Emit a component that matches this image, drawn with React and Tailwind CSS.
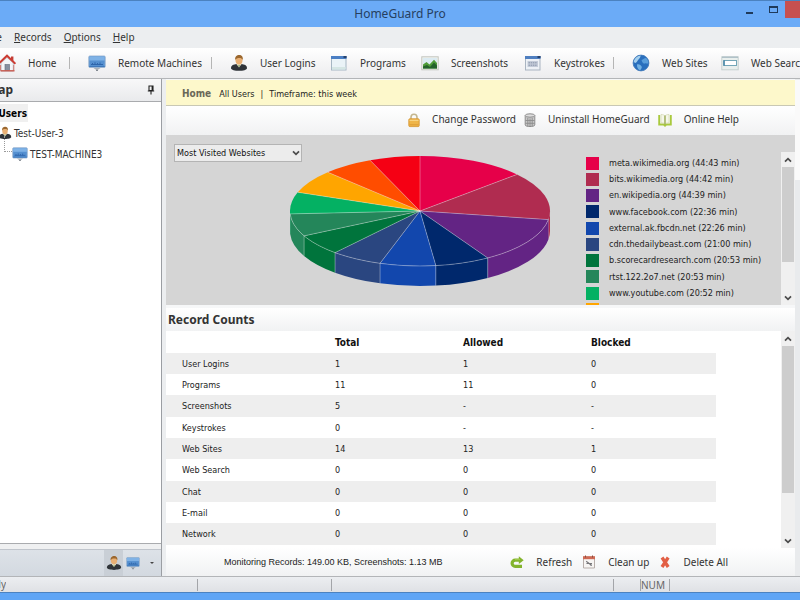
import React from "react";

const uiFont = "font-['Noto_Sans',sans-serif]";
const denseFont = "font-['DejaVu_Sans_Condensed','DejaVu_Sans',sans-serif]";

/* ---------- icons ---------- */

function HouseIcon() {
  return (
    <svg viewBox="0 0 18 18" className="size-[18px] shrink-0" aria-hidden="true">
      <path d="M3 9 9 3.4 15.300 9v8H3z" fill="#f4f5f8" stroke="#a9b0bb" strokeWidth=".7" />
      <path d="M13 2.500h2.400V7L13 5z" fill="#c43d35" />
      <path d="M.6 9.800 9 1.700l8.400 8.100" fill="none" stroke="#cc3c33" strokeWidth="2" />
      <rect x="7" y="10.500" width="4.500" height="6" fill="#8790a0" stroke="#636c7c" strokeWidth=".6" />
      <path d="M2.500 16.800H16.500" stroke="#c95b50" strokeWidth="1.400" />
      <path d="M2.600 11v5.500M15.800 11v5.500" stroke="#c95b50" strokeWidth=".8" />
    </svg>
  );
}

function MonitorIcon({ size = "size-[18px]" }) {
  return (
    <svg viewBox="0 0 18 18" className={size + " shrink-0"} aria-hidden="true">
      <rect x=".8" y="2" width="16.400" height="11.500" rx="1" fill="#5590d0" stroke="#9bb3cf" strokeWidth=".9" />
      <path d="M1.300 2.500h15.400v4H1.300z" fill="#7fb2e6" />
      <path d="M3 10.500h12M4.500 9v1.500M7 8.300v2.200M9.500 9v1.500M12 8.500v2" stroke="#2f66ab" strokeWidth="1" />
      <path d="M1.300 12.500h15.400" stroke="#3f78ba" strokeWidth="1" />
      <path d="M5.500 14h7l-2 1.600h-3z" fill="#a9b0b8" />
      <path d="M8 15.500h2v1.500H8z" fill="#848b93" />
    </svg>
  );
}

function UserIcon({ size = "size-[18px]" }) {
  return (
    <svg viewBox="0 0 18 18" className={size + " shrink-0"} aria-hidden="true">
      <path d="M1 14.200c0-3 2.700-3.800 5.500-4.200h5c2.800.4 5.500 1.200 5.500 4.200 0 3.400-16 3.400-16 0z" fill="#2f3338" />
      <path d="M6.300 10 9 13.500l2.700-3.500z" fill="#e9e4c8" />
      <path d="m8.500 11 .5 2.500.6-2.500z" fill="#5d8a3b" />
      <ellipse cx="9" cy="6.300" rx="3.500" ry="4.200" fill="#e9b074" />
      <path d="M5.300 6C4.600 2.800 6.800 1 9.200 1s4.200 1.900 3.500 5C12 4.400 11 4 9.300 4S6 4.400 5.300 6z" fill="#9b672e" />
    </svg>
  );
}

function WindowIcon() {
  return (
    <svg viewBox="0 0 18 18" className="size-[18px] shrink-0" aria-hidden="true">
      <rect x="1.500" y="2.500" width="14.500" height="13.500" fill="#eaf3f7" stroke="#a6b6c3" />
      <path d="M1 2h15.500v3H1z" fill="#4b7fc4" />
      <path d="M13.500 2h3v2h-3z" fill="#27426d" />
      <path d="M2 13h13.500v2.500H2z" fill="#d5e6e4" />
    </svg>
  );
}

function PictureIcon() {
  return (
    <svg viewBox="0 0 18 18" className="size-[18px] shrink-0" aria-hidden="true">
      <rect x=".8" y="2.800" width="16.400" height="13" fill="#f3f4ee" stroke="#c3c6bf" />
      <path d="M2 4h14v10.500H2z" fill="#dcebf2" />
      <path d="M2 10.500 5.500 8l3 2.500L13 5.800l3 3.200v5.500H2z" fill="#4f9c38" />
      <path d="M2 12.500 6 11l3 2 4-4.500 3 3v3H2z" fill="#23622b" />
    </svg>
  );
}

function KeystrokesIcon() {
  return (
    <svg viewBox="0 0 18 18" className="size-[18px] shrink-0" aria-hidden="true">
      <rect x="1.500" y="2.500" width="14.500" height="13.500" fill="#edf1f6" stroke="#a9b4c1" />
      <path d="M1 2h15.500v3H1z" fill="#4f7fc0" />
      <path d="M13.500 2h3v2h-3z" fill="#27426d" />
      <rect x="3.500" y="7" width="10.500" height="6" fill="#c3cbd8" />
      <path d="M4.500 8.800h8.500M4.500 11.200h8.500" stroke="#8893a8" strokeWidth="1" strokeDasharray="1.500 .7" />
    </svg>
  );
}

function GlobeIcon() {
  return (
    <svg viewBox="0 0 18 18" className="size-[18px] shrink-0" aria-hidden="true">
      <circle cx="9" cy="9" r="7.900" fill="#2a6fbd" />
      <path d="M1.500 8C2.500 3.500 6 1.200 9 1.200c-1 1.500-.5 2.500-2 3.800S5 8.500 3.500 9z" fill="#a5d0ee" />
      <path d="M9.500 6c2-.8 3.500-2.500 5-1.800 1.500 1.500 2 3.500 2 5-1.500 1-2.500-.5-3.800.3S10 8 9.500 6z" fill="#5a9edb" />
      <path d="M5 10.500c2-.5 3.500.5 4.500 1.800s-.5 3-1.500 4c-2-.8-3.300-3.500-3-5.800z" fill="#72b1e3" />
      <circle cx="9" cy="9" r="7.900" fill="none" stroke="#3a75b8" strokeWidth=".8" />
    </svg>
  );
}

function SearchBoxIcon() {
  return (
    <svg viewBox="0 0 18 18" className="size-[18px] shrink-0" aria-hidden="true">
      <rect x=".8" y="2.800" width="16.400" height="13" fill="#e9efed" stroke="#c5d0cf" />
      <path d="M1 3.200h16" stroke="#9db3bd" />
      <rect x="3" y="6.500" width="12.500" height="5" fill="#fff" stroke="#74a6b7" />
      <path d="M3 6.300v5.400" stroke="#4584a6" strokeWidth="1.500" />
    </svg>
  );
}

function LockIcon() {
  return (
    <svg viewBox="0 0 12 16" className="h-4 w-3 shrink-0" aria-hidden="true">
      <path d="M3 8V5.200a3 3 0 0 1 6 0V8" fill="none" stroke="#c4b78f" strokeWidth="1.600" />
      <rect x=".8" y="6.800" width="10.400" height="7.800" rx="1" fill="#efb548" stroke="#d3922b" strokeWidth=".8" />
      <path d="M1.500 8.300h9" stroke="#fbdc92" />
      <path d="M1.500 12.800h9" stroke="#dd9c35" />
    </svg>
  );
}

function UninstallIcon() {
  return (
    <svg viewBox="0 0 12 16" className="h-4 w-3 shrink-0" aria-hidden="true">
      <path d="M1.200 3.500h9.600v9.500c0 2-9.600 2-9.600 0z" fill="#c9c9c9" stroke="#8d8d8d" />
      <ellipse cx="6" cy="3.500" rx="4.800" ry="1.700" fill="#dedede" stroke="#8d8d8d" />
      <path d="M3.800 6v8M6 6.500v8M8.200 6v8M1.500 8.500h9M1.500 11.300h9" stroke="#8c8c8c" strokeWidth=".9" />
    </svg>
  );
}

function BookIcon() {
  return (
    <svg viewBox="0 0 14 16" className="h-4 w-3.5 shrink-0" aria-hidden="true">
      <path d="M1.200 3v9.500h4.600L7 13.700l1.200-1.200h4.600V3" fill="none" stroke="#a9c93e" strokeWidth="1.900" />
      <path d="M3 2.500c1.700 0 3 .3 4 1.500v8c-1-1-2.300-1.200-4-1.200z" fill="#f5f7ea" stroke="#ccd3a8" strokeWidth=".6" />
      <path d="M11 2.500c-1.700 0-3 .3-4 1.500v8c1-1 2.300-1.200 4-1.200z" fill="#f5f7ea" stroke="#ccd3a8" strokeWidth=".6" />
      <path d="M7 3.500v9" stroke="#94a64a" strokeWidth="1.200" />
    </svg>
  );
}

function RefreshIcon() {
  return (
    <svg viewBox="0 0 14 14" className="size-3.5 shrink-0" aria-hidden="true">
      <path d="M9.500 5.200H5.200a3.100 3.100 0 0 0 0 6.200H12" fill="none" stroke="#83b42d" strokeWidth="3.200" />
      <path d="M8.800 1.200 13.700 5.200 8.800 9z" fill="#83b42d" />
      <path d="M5 4.600h5" stroke="#a3cc4c" strokeWidth="1" />
    </svg>
  );
}

function CleanUpIcon() {
  return (
    <svg viewBox="0 0 14 14" className="size-3.5 shrink-0" aria-hidden="true">
      <path d="M1.500 2h11v11h-11z" fill="#f7f5f3" stroke="#b7aeaa" />
      <path d="M1 1.200h12v3H1z" fill="#cf6a55" />
      <path d="M3.500.5v2M10.500.5v2" stroke="#8d4a3d" />
      <path d="m4.200 6.200 5.600 4.300M4.500 8.500h5.500M5 6.500v2M9 8.500v2.500" stroke="#77777a" strokeWidth="1.100" fill="none" />
    </svg>
  );
}

function DeleteIcon() {
  return (
    <svg viewBox="0 0 12 14" className="h-3.5 w-3 shrink-0" aria-hidden="true">
      <path d="M3 2.500 9.200 12M9.200 2.500 3 12" stroke="#e25f45" strokeWidth="3.300" />
    </svg>
  );
}

function PinIcon() {
  return (
    <svg viewBox="0 0 8 10" className="h-2.5 w-2" aria-hidden="true">
      <path d="M2 1h4v4.500H2zM.8 6h6.400M4 6v3.500" fill="none" stroke="#222" strokeWidth="1.100" />
      <path d="M4.600 1H6v4.500H4.600z" fill="#222" />
    </svg>
  );
}

function Chevron({ up = false }) {
  return (
    <svg viewBox="0 0 8 6" className="h-1.5 w-2" aria-hidden="true">
      <path d={up ? "M1 4.700 4 1.600 7 4.700" : "M1 1.300 4 4.400 7 1.300"} fill="none" stroke="#4c4c4c" strokeWidth="1.700" />
    </svg>
  );
}

/* ---------- data ---------- */

const tools = [
  { label: "Home", Icon: HouseIcon, width: "w-[90px]", divider: true },
  { label: "Remote Machines", Icon: MonitorIcon, width: "w-[142px]", divider: true },
  { label: "User Logins", Icon: UserIcon, width: "w-[100px]" },
  { label: "Programs", Icon: WindowIcon, width: "w-[91px]" },
  { label: "Screenshots", Icon: PictureIcon, width: "w-[103px]" },
  { label: "Keystrokes", Icon: KeystrokesIcon, width: "w-[108px]", divider: true },
  { label: "Web Sites", Icon: GlobeIcon, width: "w-[89px]" },
  { label: "Web Search", Icon: SearchBoxIcon, width: "w-[100px]" },
];

const sites = [
  { name: "meta.wikimedia.org (44:43 min)", swatch: "bg-[#e60049]" },
  { name: "bits.wikimedia.org (44:42 min)", swatch: "bg-[#b02c50]" },
  { name: "en.wikipedia.org (44:39 min)", swatch: "bg-[#632484]" },
  { name: "www.facebook.com (22:36 min)", swatch: "bg-[#00286c]" },
  { name: "external.ak.fbcdn.net (22:26 min)", swatch: "bg-[#1247ad]" },
  { name: "cdn.thedailybeast.com (21:00 min)", swatch: "bg-[#2a4680]" },
  { name: "b.scorecardresearch.com (20:53 min)", swatch: "bg-[#00743c]" },
  { name: "rtst.122.2o7.net (20:53 min)", swatch: "bg-[#24865a]" },
  { name: "www.youtube.com (20:52 min)", swatch: "bg-[#04b163]" },
  { name: "s.webclicktracker.com (20:51 min)", swatch: "bg-[#ffa500]" },
];

const slices = [
  { from: 0, to: 48.3, color: "#e60049" },
  { from: 48.3, to: 99, color: "#b02c50" },
  { from: 99, to: 148.6, color: "#632484" },
  { from: 148.6, to: 173, color: "#00286c" },
  { from: 173, to: 197.9, color: "#1247ad" },
  { from: 197.9, to: 220.8, color: "#2a4680" },
  { from: 220.8, to: 243.1, color: "#00743c" },
  { from: 243.1, to: 267, color: "#24865a" },
  { from: 267, to: 289.9, color: "#04b163" },
  { from: 289.9, to: 314.8, color: "#ffa500" },
  { from: 314.8, to: 337.4, color: "#ff4d00" },
  { from: 337.4, to: 360, color: "#f50014" },
];

const records = [
  ["User Logins", "1", "1", "0"],
  ["Programs", "11", "11", "0"],
  ["Screenshots", "5", "-", "-"],
  ["Keystrokes", "0", "-", "-"],
  ["Web Sites", "14", "13", "1"],
  ["Web Search", "0", "0", "0"],
  ["Chat", "0", "0", "0"],
  ["E-mail", "0", "0", "0"],
  ["Network", "0", "0", "0"],
];

/* ---------- pie chart ---------- */

const RX = 130;
const RY = 55;
const DEPTH = 20;

function rim(deg) {
  const t = (deg * Math.PI) / 180;
  return [131 + RX * Math.sin(t), 56 - RY * Math.cos(t)];
}

function PieChart() {
  const edge = { stroke: "#ffffff", strokeOpacity: 0.32, strokeWidth: 1 };
  return (
    <svg viewBox="0 0 262 134" className="h-[134px] w-[262px] shrink-0" role="img" aria-label="Most visited websites">
      {slices.map((s) => {
        const a = Math.max(s.from, 90);
        const b = Math.min(s.to, 270);
        if (a >= b) return null;
        const [x1, y1] = rim(a);
        const [x2, y2] = rim(b);
        return (
          <path
            key={s.color}
            d={`M${x1} ${y1}A${RX} ${RY} 0 0 1 ${x2} ${y2}V${y2 + DEPTH}A${RX} ${RY} 0 0 0 ${x1} ${y1 + DEPTH}Z`}
            fill={s.color}
          />
        );
      })}
      {slices.map((s) => {
        const [x1, y1] = rim(s.from);
        const [x2, y2] = rim(s.to);
        return <path key={s.color} d={`M131 56L${x1} ${y1}A${RX} ${RY} 0 0 1 ${x2} ${y2}Z`} fill={s.color} />;
      })}
      {slices.map((s) => {
        const [x, y] = rim(s.from);
        const drop = s.from > 120 && s.from < 250 ? `V${y + DEPTH}` : "";
        return <path key={s.color} d={`M131 56L${x} ${y}${drop}`} fill="none" {...edge} />;
      })}
      <path d={`M${rim(99).join(" ")}A${RX} ${RY} 0 0 1 ${rim(267).join(" ")}`} fill="none" {...edge} />
    </svg>
  );
}

/* ---------- parts ---------- */

function ScrollBar({ thumb }) {
  return (
    <div className="flex w-3.5 shrink-0 flex-col bg-[#f0f0f0]">
      <button type="button" aria-label="Scroll up" className="flex h-[15px] shrink-0 items-center justify-center">
        <Chevron up />
      </button>
      <div className="min-h-0 flex-1 px-px">
        <div className={"bg-[#cdcdcd] " + thumb} />
      </div>
      <button type="button" aria-label="Scroll down" className="flex h-[15px] shrink-0 items-center justify-center">
        <Chevron />
      </button>
    </div>
  );
}

function TitleBar() {
  return (
    <header className="grid h-[27px] shrink-0 grid-cols-[1fr_auto_1fr] border-t border-[#4b82c0] bg-[#6babf7]">
      <span />
      <h1 className="self-center text-xs text-[#26405f]">HomeGuard Pro</h1>
      <div className="-mr-4 flex items-start justify-end">
        <button type="button" aria-label="Minimize" className="flex h-[17px] w-6 items-center justify-center">
          <span className="mt-1.5 h-0.5 w-[7px] bg-[#1f3a5a]" />
        </button>
        <button type="button" aria-label="Maximize" className="flex h-[17px] w-6 items-center justify-center">
          <span className="h-[7px] w-[9px] border border-t-2 border-[#1f3a5a]" />
        </button>
        <button type="button" aria-label="Close" className="h-[17px] w-[31px] bg-[#c75050]" />
      </div>
    </header>
  );
}

function MenuBar() {
  return (
    <nav className="-ml-3.5 flex h-[21px] shrink-0 items-center gap-3 bg-[#eceef0] text-[10px] text-[#333]">
      {["File", "Records", "Options", "Help"].map((m) => (
        <button key={m} type="button">
          <span className="underline">{m[0]}</span>
          {m.slice(1)}
        </button>
      ))}
    </nav>
  );
}

function ToolBar() {
  return (
    <div className="flex h-[31px] shrink-0 overflow-hidden border-b border-[#b3b5b8] bg-linear-to-b from-white to-[#ececee]">
      <div className="-ml-0.5 flex items-center">
        {tools.map(({ label, Icon, width, divider }) => (
          <div key={label} className={"flex shrink-0 items-center " + width}>
            <button type="button" className="flex items-center gap-3 whitespace-nowrap text-[10px] text-[#333]">
              <Icon />
              {label}
            </button>
            {divider && <span className="mr-[18px] ml-auto h-3 w-px bg-[#b5b5b5]" />}
          </div>
        ))}
      </div>
    </div>
  );
}

function SidePanel() {
  return (
    <aside className="flex w-[162px] shrink-0 flex-col border-r border-[#9b9ea3] bg-white">
      <div className="flex h-[23px] shrink-0 items-center border-b border-[#a9abae] bg-linear-to-b from-[#f8f8f9] to-[#e9eaec] pr-1.5">
        <div className="flex w-[13px] justify-end overflow-hidden">
          <h2 className="shrink-0 text-xs font-bold whitespace-nowrap text-[#333]">Site Map</h2>
        </div>
        <button type="button" aria-label="Pin panel" className="ml-auto">
          <PinIcon />
        </button>
      </div>
      <div className={"min-h-0 flex-1 overflow-hidden text-[10px] text-[#333] " + denseFont}>
        <div className="mt-0.5 flex h-[18px] w-7 items-center justify-end overflow-hidden bg-[#f0f0f0] pr-px">
          <span className="shrink-0 font-bold whitespace-nowrap text-black">All Users</span>
        </div>
        <div className="-ml-0.5 flex h-[22px] items-center gap-0.5">
          <UserIcon size="size-3.5" />
          Test-User-3
        </div>
        <div className="flex h-5 items-center">
          <span className="-mt-5 ml-1 h-4 w-2 border-b border-l border-dotted border-[#9a9a9a]" />
          <MonitorIcon size="size-4" />
          <span className="ml-0.5">TEST-MACHINE3</span>
        </div>
      </div>
      <div className="h-1.5 shrink-0 border-t border-[#a9abae] bg-[#eff0f1]" />
      <div className="flex h-[27px] shrink-0 items-stretch justify-end border-t border-[#c0c5cc] bg-linear-to-b from-[#dde2e8] to-[#d3d9e0]">
        <button type="button" aria-label="Users" className="flex w-[19px] items-center justify-center bg-[#c9cfd6]">
          <UserIcon size="size-4" />
        </button>
        <button type="button" aria-label="Machines" className="flex w-[19px] items-center justify-center">
          <MonitorIcon size="size-3.5" />
        </button>
        <button type="button" aria-label="More" className="flex w-[19px] items-center justify-center">
          <span className="border-x-2 border-t-2 border-x-transparent border-t-[#444]" />
        </button>
      </div>
    </aside>
  );
}

function ActionButton({ Icon, children }) {
  return (
    <button type="button" className="flex items-center gap-3 text-[10px] whitespace-nowrap text-[#333]">
      <Icon />
      {children}
    </button>
  );
}

function ChartPanel() {
  return (
    <section className="flex h-[170px] shrink-0 overflow-hidden bg-[#d5d5d5]">
      <div className="flex min-w-0 flex-1 justify-between">
        <div className="relative mt-[9px] ml-2 h-[18px] w-32 shrink-0">
          <select
            aria-label="Chart"
            className={"block h-[18px] w-32 appearance-none border border-[#b4b4b4] bg-[#ececec] pt-px pl-0.5 text-[9px] text-[#111] " + denseFont}
          >
            <option>Most Visited Websites</option>
          </select>
          <span className="pointer-events-none absolute inset-y-0 right-0.5 flex items-center">
            <Chevron />
          </span>
        </div>
        <div className="mt-5 -ml-7">
          <PieChart />
        </div>
        <ul className={"ml-5 flex w-[195px] shrink-0 flex-col pt-5 text-[9px] text-[#222] " + denseFont}>
          {sites.map((s) => (
            <li key={s.name} className="flex h-4 shrink-0 items-center gap-2.5 whitespace-nowrap nth-[4n]:h-[17px]">
              <span className={"size-[13px] shrink-0 " + s.swatch} />
              <span className="pt-0.5">{s.name}</span>
            </li>
          ))}
        </ul>
      </div>
      <div className="flex pt-[17px]">
        <ScrollBar thumb="h-[95px]" />
      </div>
    </section>
  );
}

function RecordsPanel() {
  return (
    <section className="flex min-h-0 flex-1 flex-col">
      <h2 className="mt-[3px] flex h-[23px] shrink-0 items-center bg-linear-to-b from-white to-[#f1f2f3] pl-0.5 text-xs font-bold text-[#333]">
        Record Counts
      </h2>
      <div className="flex min-h-0 flex-1 bg-white">
        <div className="min-w-0 flex-1 overflow-hidden">
          <table className={"w-[550px] table-fixed border-collapse text-left text-[9px] text-[#222] " + denseFont}>
            <colgroup>
              <col className="w-[169px]" />
              <col className="w-32" />
              <col className="w-32" />
              <col />
            </colgroup>
            <thead>
              <tr className="h-[22px] text-[10px] text-[#111]">
                <td />
                <th scope="col" className="p-0">Total</th>
                <th scope="col" className="p-0">Allowed</th>
                <th scope="col" className="p-0">Blocked</th>
              </tr>
            </thead>
            <tbody>
              {records.map(([name, total, allowed, blocked]) => (
                <tr key={name} className="h-[21px] odd:bg-[#eeeeee] nth-[3n]:h-[22px]">
                  <th scope="row" className="p-0 pt-0.5 pl-4 font-normal">{name}</th>
                  <td className="p-0 pt-0.5">{total}</td>
                  <td className="p-0 pt-0.5">{allowed}</td>
                  <td className="p-0 pt-0.5">{blocked}</td>
                </tr>
              ))}
            </tbody>
          </table>
        </div>
        <ScrollBar thumb="h-[147px]" />
      </div>
      <div className="flex h-7 shrink-0 items-center bg-linear-to-b from-white to-[#f1f2f3] pr-[67px]">
        <p className="ml-[58px] pt-0.5 font-['Liberation_Sans',sans-serif] text-[9px] whitespace-nowrap text-[#222]">
          Monitoring Records: 149.00 KB, Screenshots: 1.13 MB
        </p>
        <div className="ml-auto flex gap-2.5">
          <ActionButton Icon={RefreshIcon}>Refresh</ActionButton>
          <ActionButton Icon={CleanUpIcon}>Clean up</ActionButton>
          <ActionButton Icon={DeleteIcon}>Delete All</ActionButton>
        </div>
      </div>
    </section>
  );
}

export default function App() {
  return (
    <div className={"flex h-screen flex-col overflow-hidden bg-[#eceef0] " + uiFont}>
      <TitleBar />
      <MenuBar />
      <ToolBar />
      <main className="flex min-h-0 flex-1 border-b border-[#b3b5b8]">
        <SidePanel />
        <div className="ml-1 flex min-w-0 flex-1 flex-col bg-[#f6f7f8]">
          <div className={"mt-px flex h-[26px] shrink-0 items-baseline border-b border-[#c9c8b4] bg-[#fdf8cb] pt-1.5 pl-4 text-[9px] text-[#222] " + denseFont}>
            <a href="#home" className="text-[10px] font-bold text-[#6a6858]">Home</a>
            <a href="#users" className="ml-2">All Users</a>
            <span className="mx-1.5">|</span>
            <span>Timeframe: this week</span>
          </div>
          <div className="flex h-[29px] shrink-0 items-center justify-end gap-2 bg-linear-to-b from-white to-[#f1f2f3] pr-14 pb-0.5">
            <ActionButton Icon={LockIcon}>Change Password</ActionButton>
            <ActionButton Icon={UninstallIcon}>Uninstall HomeGuard</ActionButton>
            <ActionButton Icon={BookIcon}>Online Help</ActionButton>
          </div>
          <ChartPanel />
          <RecordsPanel />
        </div>
        <div className="w-[5px] shrink-0 bg-[#e9ebed] pt-px">
          <div className="h-[100px] bg-[#fafafa]" />
        </div>
      </main>
      <footer className="flex h-[15px] shrink-0 items-center bg-linear-to-b from-[#eceef1] to-[#dfe1e5] text-[10px] text-[#666]">
        <div className="flex w-1.5 justify-end overflow-hidden">
          <span className="shrink-0">Ready</span>
        </div>
        <span className="ml-[191px] h-3 w-px bg-[#a3a5a9]" />
        <span className="ml-[133px] h-3 w-px bg-[#a3a5a9]" />
        <span className="mr-[26px] ml-auto h-3 w-px bg-[#a3a5a9]" />
        <span className="mr-[130px] border-x border-[#a3a5a9] pr-1 leading-3">NUM</span>
      </footer>
      <div className="h-2 shrink-0 border-t border-[#4b82c0] bg-[#5fa5f5]" />
    </div>
  );
}
